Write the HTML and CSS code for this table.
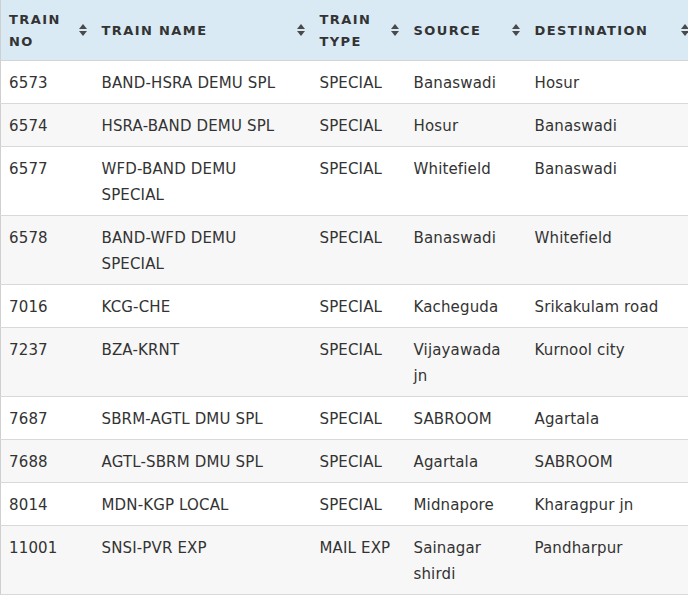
FILE: index.html
```html
<!DOCTYPE html>
<html>
<head>
<meta charset="utf-8">
<link rel="stylesheet" href="styles.css">
</head>
<body>
<div class="wrap">
<table class="trains">
<colgroup>
<col class="c1"><col class="c2"><col class="c3"><col class="c4"><col class="c5">
</colgroup>
<thead>
<tr>
<th><span class="lbl">Train No</span><span class="sort"></span></th>
<th><span class="lbl">Train Name</span><span class="sort"></span></th>
<th><span class="lbl">Train Type</span><span class="sort"></span></th>
<th><span class="lbl">Source</span><span class="sort"></span></th>
<th><span class="lbl">Destination</span><span class="sort"></span></th>
</tr>
</thead>
<tbody>
<tr><td>6573</td><td>BAND-HSRA DEMU SPL</td><td>SPECIAL</td><td>Banaswadi</td><td>Hosur</td></tr>
<tr><td>6574</td><td>HSRA-BAND DEMU SPL</td><td>SPECIAL</td><td>Hosur</td><td>Banaswadi</td></tr>
<tr><td>6577</td><td>WFD-BAND DEMU SPECIAL</td><td>SPECIAL</td><td>Whitefield</td><td>Banaswadi</td></tr>
<tr><td>6578</td><td>BAND-WFD DEMU SPECIAL</td><td>SPECIAL</td><td>Banaswadi</td><td>Whitefield</td></tr>
<tr><td>7016</td><td>KCG-CHE</td><td>SPECIAL</td><td>Kacheguda</td><td>Srikakulam road</td></tr>
<tr><td>7237</td><td>BZA-KRNT</td><td>SPECIAL</td><td>Vijayawada jn</td><td>Kurnool city</td></tr>
<tr><td>7687</td><td>SBRM-AGTL DMU SPL</td><td>SPECIAL</td><td>SABROOM</td><td>Agartala</td></tr>
<tr><td>7688</td><td>AGTL-SBRM DMU SPL</td><td>SPECIAL</td><td>Agartala</td><td>SABROOM</td></tr>
<tr><td>8014</td><td>MDN-KGP LOCAL</td><td>SPECIAL</td><td>Midnapore</td><td>Kharagpur jn</td></tr>
<tr><td>11001</td><td>SNSI-PVR EXP</td><td>MAIL EXP</td><td>Sainagar shirdi</td><td>Pandharpur</td></tr>
</tbody>
</table>
</div>
</body>
</html>
```
FILE: styles.css
```css
html, body {
  margin: 0;
  padding: 0;
  overflow: hidden;
  background: #fff;
}
.wrap {
  width: 688px;
  overflow: hidden;
}
.trains {
  table-layout: fixed;
  border-collapse: collapse;
  width: 695px;
  font-family: "DejaVu Sans", Verdana, sans-serif;
  font-size: 15px;
  letter-spacing: 0.15px;
  color: #333;
  border-left: 1px solid #cfcfcf;
}
.c1 { width: 93px; }
.c2 { width: 218px; }
.c3 { width: 94px; }
.c4 { width: 121px; }
.c5 { width: 169px; }
.trains th {
  background: #d9eaf5;
  text-align: left;
  font-weight: bold;
  font-size: 13px;
  letter-spacing: 1.4px;
  text-transform: uppercase;
  line-height: 22px;
  padding: 9px 24px 7px 8px;
  position: relative;
  border-bottom: 1px solid #d4d4d4;
  vertical-align: middle;
}
.sort {
  position: absolute;
  right: 7px;
  top: 50%;
  width: 8px;
  height: 12px;
  margin-top: -6px;
}
.sort::before, .sort::after {
  content: "";
  position: absolute;
  left: 0;
  border-left: 4px solid transparent;
  border-right: 4px solid transparent;
}
.sort::before {
  top: 0;
  border-bottom: 5px solid #4a4a4a;
}
.sort::after {
  bottom: 0;
  border-top: 5px solid #4a4a4a;
}
.trains td {
  padding: 9px 12px 7px 8px;
  line-height: 26px;
  vertical-align: top;
  border-bottom: 1px solid #d9d9d9;
}
.trains tbody tr:nth-child(even) td {
  background: #f7f7f7;
}
```
